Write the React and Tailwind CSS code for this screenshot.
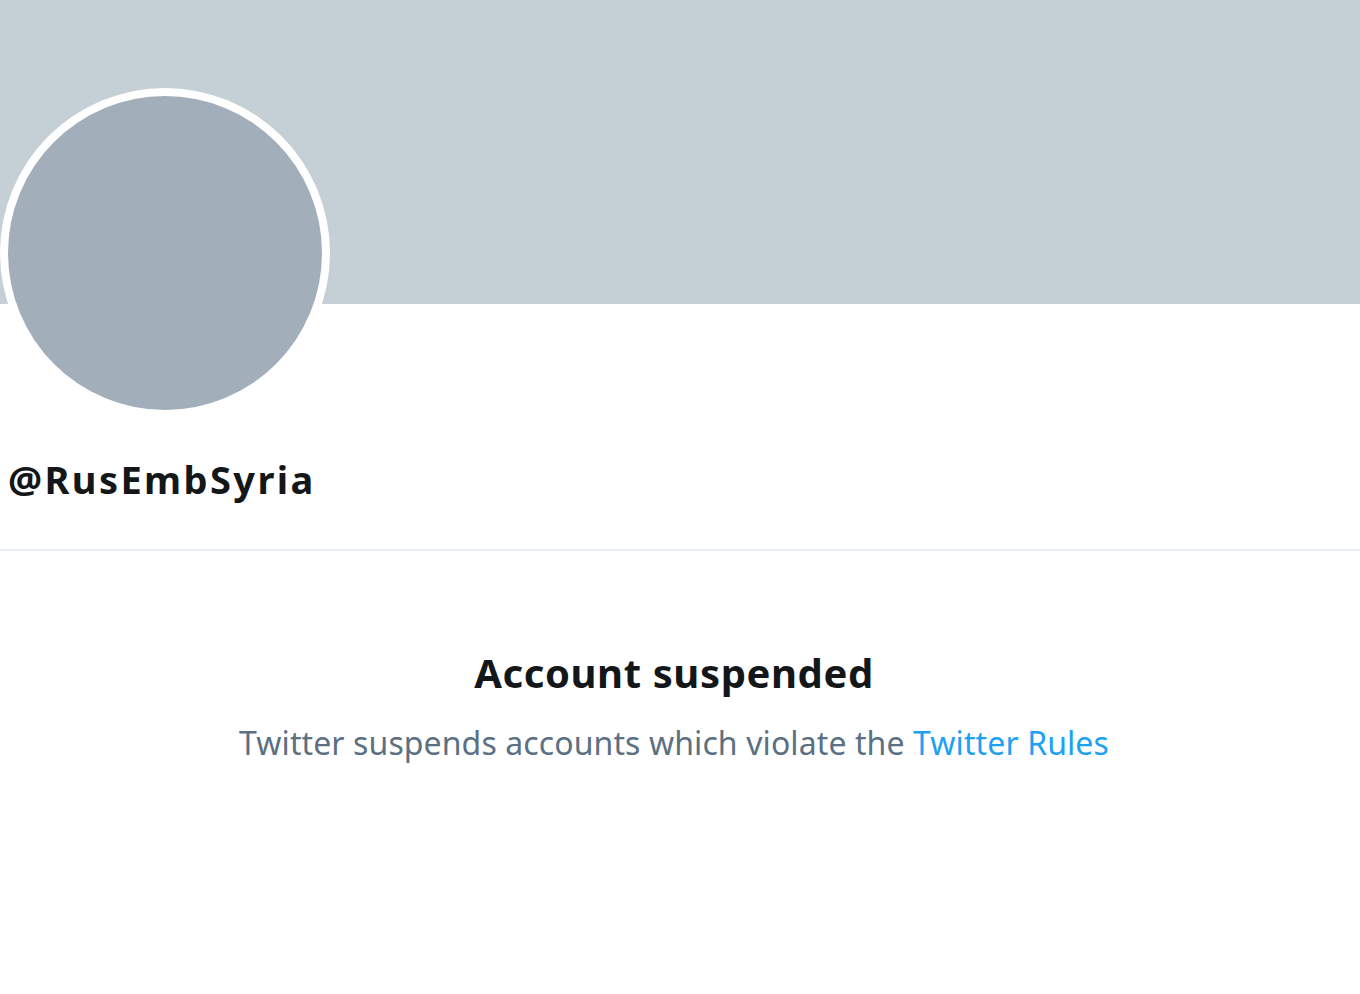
import React from "react";

function App() {
  return (
    <div className="min-h-screen bg-white" style={{ fontFamily: '"Noto Sans", "Open Sans", sans-serif' }}>
      {/* Banner */}
      <div className="h-[304px] bg-[#c4cfd6]" />

      {/* Profile header */}
      <div className="border-b-2 border-[#e6ecf0]">
        <div className="-mt-[216px] w-[330px] h-[330px] rounded-full bg-white p-[8px]">
          <div className="w-full h-full rounded-full bg-[#a2afba]" />
        </div>
        <h2 className="pl-[8px] mt-[36px] pb-[45px] text-[38px] leading-[50px] font-bold text-[#14171a] tracking-[2.4px]">
          @RusEmbSyria
        </h2>
      </div>

      {/* Suspended notice */}
      <div className="flex flex-col items-center pt-[96px] pr-[12px]">
        <h1 className="text-[40px] leading-[52px] font-bold text-[#14171a] tracking-[0.6px]">Account suspended</h1>
        <p className="mt-[22px] text-[32px] leading-[44px] text-[#5b7083] tracking-[0.1px]">
          Twitter suspends accounts which violate the{" "}
          <a href="#" className="text-[#1da1f2]">Twitter Rules</a>
        </p>
      </div>
    </div>
  );
}

export default App;
